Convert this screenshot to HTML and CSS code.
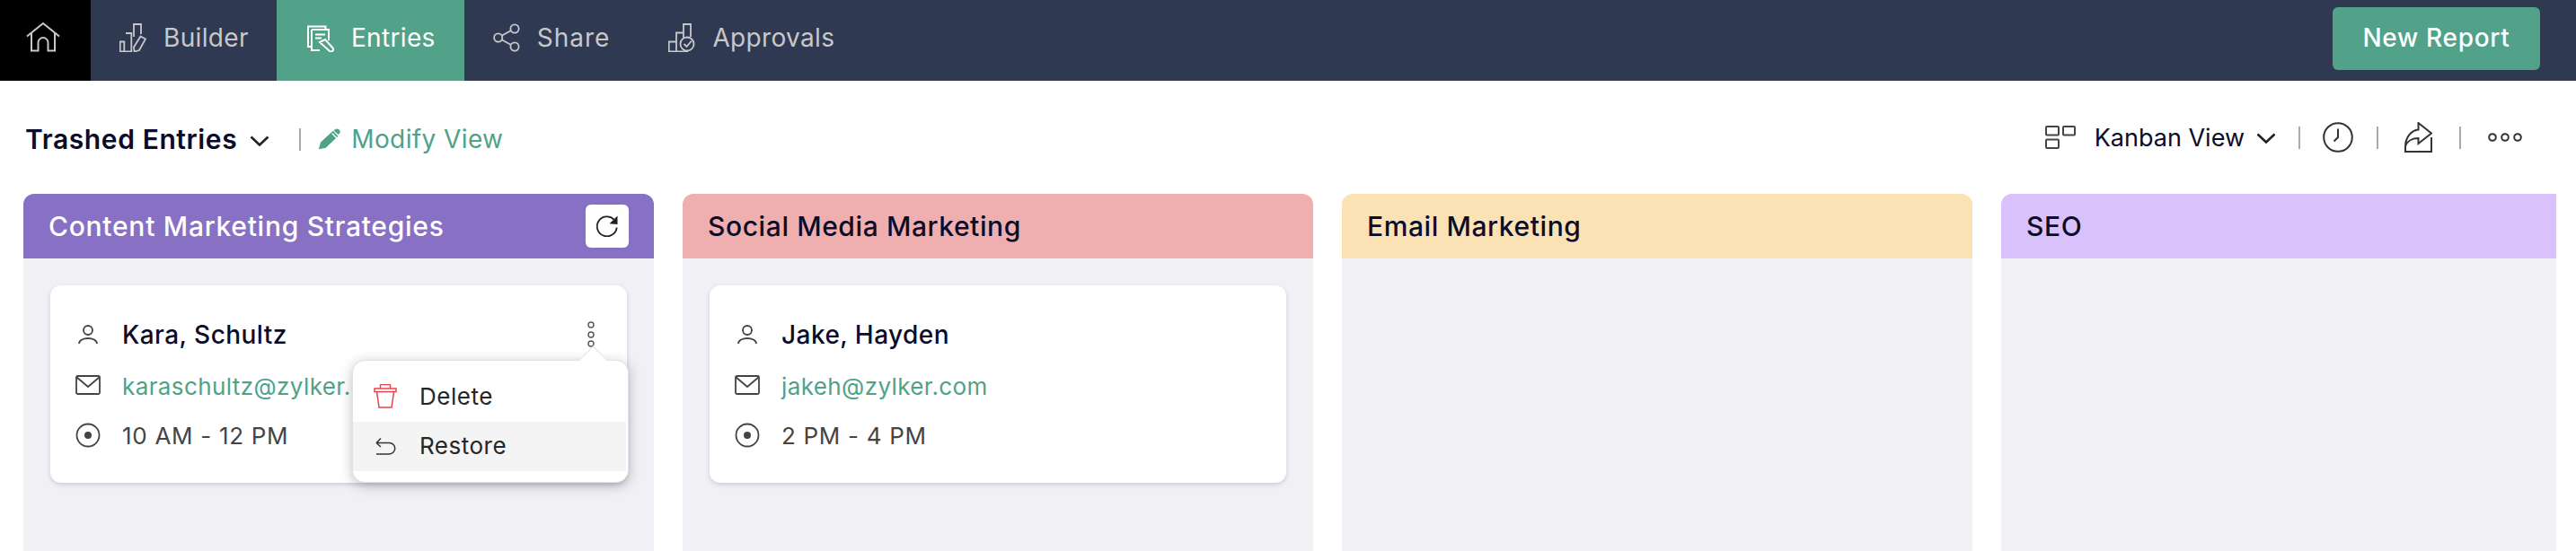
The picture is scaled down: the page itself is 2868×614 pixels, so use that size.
FILE: index.html
```html
<!DOCTYPE html>
<html lang="en">
<head>
<meta charset="utf-8">
<title>Trashed Entries</title>
<link rel="stylesheet" href="styles.css">
</head>
<body>
<header class="nav">
  <a class="home"><svg class="i-home" viewBox="0 0 40 36"><path d="M2 16.5 20 2l18 14.5M7 13v19.5h7.5v-9a5.5 5.5 0 0 1 11 0v9H33V13"/></svg></a>
  <a class="tab tab-builder"><svg class="i-nav" viewBox="0 0 30 32"><path d="M.7 20.5h4.6v10.8H.7zM7 11h6.3v20.3H5.300M16 15V1h8v11M23.500 14.500l5.500 3-7 12.500-5.500 1.500-.5-5z"/></svg><span>Builder</span></a>
  <a class="tab active"><svg class="i-nav" viewBox="0 0 30 32"><path d="M4 26H1V3.500h19.500V7M5 7h19v12M5 7v23h9M9 12.500h11M9 16.500h7M14 21l6-3 8.500 9.500a2.500 2.500 0 0 1-3.500 3.500z"/></svg><span>Entries</span></a>
  <a class="tab tab-share"><svg class="i-nav" viewBox="0 0 30 32"><circle cx="5.700" cy="16" r="4.600"/><circle cx="24" cy="6" r="4.600"/><circle cx="24" cy="26" r="4.600"/><path d="m10 13.500 10-5.500M10 18.500l10 5.500"/></svg><span>Share</span></a>
  <a class="tab"><svg class="i-nav" viewBox="0 0 30 32"><path d="M.7 20.500h8.300v10.800H.7zM9 31.300V10.500h8M17 16V1h8v14M9 31.300h13"/><circle cx="21" cy="23" r="7.500"/><path d="m17.500 23 3 3 5.500-6.500"/></svg><span>Approvals</span></a>
  <button class="new-report">New Report</button>
</header>

<section class="toolbar">
  <h1 class="view-title">Trashed Entries</h1>
  <svg class="chev chev-title" viewBox="0 0 22 12"><path d="m1.500 1.500 9.500 9 9.500-9"/></svg>
  <span class="sep sep-left"></span>
  <svg class="i-pencil" viewBox="0 0 24 22"><path d="M.7 21.300 3 14 15.500 2.500l5.200 5.500L8 20z"/><path class="notch" d="m14.500 5 5 5.300"/><path d="M17.300 1.300a3 3 0 0 1 4.500 0 3 3 0 0 1 0 4.200l-.8.800-4.800-4z"/></svg>
  <a class="modify">Modify View</a>
  <div class="tools">
    <svg class="i-kanban" viewBox="0 0 34 26"><rect x="1" y="1" width="14" height="9.500" rx="1"/><rect x="20" y="1" width="13" height="9.500" rx="1"/><rect x="1" y="15.500" width="14" height="9.500" rx="1"/></svg>
    <span class="view-name">Kanban View</span>
    <svg class="chev chev-view" viewBox="0 0 22 12"><path d="m1.500 1.500 9.500 9 9.500-9"/></svg>
    <span class="sep sep-a"></span>
    <svg class="i-clock" viewBox="0 0 34 34"><circle cx="17" cy="17" r="15.800"/><path d="M17 7.500V17l-4.500 4.500"/></svg>
    <span class="sep sep-b"></span>
    <svg class="i-export" viewBox="0 0 31 34"><path d="M1 27v6h29V17M15.500 1 30 12.500 15.500 24v-6C9 18 3 21 1 27 1 17 8 9 15.500 8.500z"/></svg>
    <span class="sep sep-c"></span>
    <svg class="i-more" viewBox="0 0 38 10"><circle cx="5" cy="5" r="3.800"/><circle cx="19" cy="5" r="3.800"/><circle cx="33" cy="5" r="3.800"/></svg>
  </div>
</section>

<main class="board">
  <section class="col">
    <div class="col-head purple">
      <h2>Content Marketing Strategies</h2>
      <button class="refresh"><svg viewBox="0 0 24 24"><path d="M19.500 4.500A11 11 0 1 0 22.700 13.500"/><path class="solid" d="M23.500.5v9.500l-9-.8z"/></svg></button>
    </div>
    <div class="col-body">
      <article class="card">
        <div class="row">
          <svg class="ico" viewBox="0 0 30 30"><circle cx="15" cy="10" r="5"/><path d="M5 25c0-8 20-8 20 0"/></svg>
          <span class="name">Kara, Schultz</span>
          <svg class="i-kebab" viewBox="0 0 8 30"><circle cx="4" cy="4" r="3"/><circle cx="4" cy="15" r="3"/><circle cx="4" cy="25" r="3"/></svg>
        </div>
        <div class="row">
          <svg class="ico" viewBox="0 0 30 30"><rect x="2" y="5" width="26" height="20" rx="1.500"/><path d="m2 6 13 11L28 6"/></svg>
          <span class="email">karaschultz@zylker.com</span>
        </div>
        <div class="row">
          <svg class="ico" viewBox="0 0 30 30"><circle cx="15" cy="15" r="12.500"/><circle class="solid" cx="15" cy="15" r="4"/></svg>
          <span class="time">10 AM - 12 PM</span>
        </div>
        <div class="popup">
          <span class="caret"></span>
          <div class="menu-item">
            <svg class="i-trash" viewBox="0 0 26 27"><path d="M1 5h24v3.500H1zM7.500 5V1.500a1 1 0 0 1 1-1h9a1 1 0 0 1 1 1V5M3.500 8.500 6 26h14l2.500-17.500"/></svg>
            <span>Delete</span>
          </div>
          <div class="menu-item hover">
            <svg class="i-restore" viewBox="0 0 26 20"><path d="M3 6.500 8 1.500M3 6.500l5 4.500M3 6.500h14.500a6.200 6.200 0 0 1 0 12.400H3"/></svg>
            <span>Restore</span>
          </div>
        </div>
      </article>
    </div>
  </section>

  <section class="col">
    <div class="col-head pink"><h2>Social Media Marketing</h2></div>
    <div class="col-body">
      <article class="card">
        <div class="row">
          <svg class="ico" viewBox="0 0 30 30"><circle cx="15" cy="10" r="5"/><path d="M5 25c0-8 20-8 20 0"/></svg>
          <span class="name">Jake, Hayden</span>
        </div>
        <div class="row">
          <svg class="ico" viewBox="0 0 30 30"><rect x="2" y="5" width="26" height="20" rx="1.500"/><path d="m2 6 13 11L28 6"/></svg>
          <span class="email">jakeh@zylker.com</span>
        </div>
        <div class="row">
          <svg class="ico" viewBox="0 0 30 30"><circle cx="15" cy="15" r="12.500"/><circle class="solid" cx="15" cy="15" r="4"/></svg>
          <span class="time">2 PM - 4 PM</span>
        </div>
      </article>
    </div>
  </section>

  <section class="col">
    <div class="col-head peach"><h2>Email Marketing</h2></div>
    <div class="col-body"></div>
  </section>

  <section class="col">
    <div class="col-head lavender"><h2>SEO</h2></div>
    <div class="col-body"></div>
  </section>
</main>
</body>
</html>
```

FILE: styles.css
```css
* { box-sizing: border-box; }
html, body { margin: 0; height: 100%; }
body {
  display: flex;
  flex-direction: column;
  height: 614px;
  overflow: hidden;
  background: #fff;
  font-family: Inter, "Liberation Sans", sans-serif;
  color: #0b0c2a;
}
svg { display: block; flex: none; fill: none; }

/* top bar */
.nav { display: flex; align-items: stretch; height: 90px; flex: none; background: #2f3a52; }
.home { display: flex; align-items: center; width: 101px; padding: 0 0 6px 28px; background: #000; }
.i-home { width: 40px; height: 36px; stroke: #c8c8c8; stroke-width: 2; }
.tab { display: flex; align-items: center; gap: 19px; padding: 0 33px 6px 32px; font-size: 28px; letter-spacing: .35px; color: #c8c8c8; }
.tab-builder { padding-right: 31px; }
.tab-share { letter-spacing: 1px; }
.tab.active { background: #52a28a; color: #fff; padding: 0 32px 6px 34px; }
.i-nav { width: 30px; height: 32px; stroke: #c8c8c8; stroke-width: 1.800; }
.active .i-nav { stroke: #fff; stroke-width: 2; }
.new-report {
  margin: 8px 40px 12px auto;
  width: 231px;
  padding: 0 0 2px;
  border: 0;
  border-radius: 6px;
  background: #52a28a;
  color: #fff;
  font: 500 28px Inter, "Liberation Sans", sans-serif;
  letter-spacing: .7px;
}

/* toolbar */
.toolbar { display: flex; align-items: center; height: 126px; flex: none; padding: 4px 60px 0 28px; }
.view-title { margin: 0; font-size: 30px; font-weight: 600; line-height: 36px; letter-spacing: .6px; }
.chev { stroke: #222; stroke-width: 2.600; }
.chev-title { width: 22px; height: 12px; margin: 4px 0 0 14px; }
.sep { width: 2px; height: 25px; background: #aaa; flex: none; }
.sep-left { margin-left: 33px; }
.i-pencil { width: 26px; height: 24px; margin-left: 19px; fill: #4fa288; }
.i-pencil .notch { stroke: #fff; stroke-width: 1.200; }
.modify { margin-left: 11px; font-size: 28px; letter-spacing: .4px; color: #4fa288; }
.tools { display: flex; align-items: center; margin: -4px 0 0 auto; }
.i-kanban { width: 34px; height: 26px; stroke: #444; stroke-width: 2; }
.view-name { margin-left: 21px; font-size: 27px; }
.chev-view { width: 22px; height: 12px; margin: 2px 0 0 13px; }
.sep-a { margin-left: 25px; }
.i-clock { width: 34px; height: 34px; margin-left: 25px; stroke: #333; stroke-width: 2; }
.sep-b { margin-left: 26px; }
.i-export { width: 31px; height: 34px; margin-left: 29px; stroke: #333; stroke-width: 2; }
.sep-c { margin-left: 30px; }
.i-more { width: 38px; height: 10px; margin-left: 30px; stroke: #333; stroke-width: 2; }

/* board */
.board { display: flex; gap: 32px; flex: 1; margin: 0 22px 0 26px; overflow: hidden; }
.col { display: flex; flex-direction: column; flex: 0 0 702px; }
.col-head {
  display: flex;
  align-items: center;
  justify-content: space-between;
  height: 72px;
  flex: none;
  padding: 0 28px 0 28px;
  border-radius: 12px 12px 0 0;
}
.col-head h2 { margin: 0; font-size: 30px; font-weight: 500; letter-spacing: .6px; }
.purple { background: #8870c4; color: #fff; }
.col-head.purple h2 { letter-spacing: .73px; }
.pink { background: #f0afaf; }
.peach { background: #fae2b5; }
.lavender { background: #d9c2fb; }
.refresh { display: flex; align-items: center; justify-content: center; width: 48px; height: 48px; padding: 0; border: 0; border-radius: 6px; background: #fff; }
.refresh svg { width: 24px; height: 24px; stroke: #222; stroke-width: 1.800; }
.refresh .solid { fill: #222; stroke: none; }
.col-body { flex: 1; padding: 30px; background: #f1f0f5; }

/* card */
.card {
  position: relative;
  height: 220px;
  padding: 27px 36px 25px 27px;
  border-radius: 12px;
  background: #fff;
  box-shadow: 0 2px 5px rgba(60, 60, 90, .2);
}
.row { display: flex; align-items: center; gap: 23px; height: 56px; font-size: 26px; }
.ico { width: 30px; height: 30px; stroke: #444; stroke-width: 1.800; }
.ico .solid { fill: #444; stroke: none; }
.name { font-size: 28px; font-weight: 500; letter-spacing: .45px; }
.email { padding-top: 2px; letter-spacing: .4px; color: #4fa288; white-space: nowrap; }
.time { letter-spacing: .7px; color: #444; }
.i-kebab { width: 8px; height: 30px; margin-left: auto; stroke: #555; stroke-width: 1.400; }

/* popup menu */
.popup {
  position: absolute;
  left: 336px;
  top: 83px;
  width: 308px;
  height: 137px;
  padding: 13px 2px 0 0;
  border: 1px solid #e2e2e2;
  border-radius: 14px;
  background: #fff;
  box-shadow: 0 3px 14px rgba(30, 30, 50, .28);
}
.caret {
  position: absolute;
  right: 27px;
  top: -12px;
  width: 23px;
  height: 23px;
  transform: rotate(45deg);
  background: #fff;
  border-top: 1px solid #e2e2e2;
  border-left: 1px solid #e2e2e2;
}
.menu-item { display: flex; align-items: center; gap: 25px; height: 55px; padding: 0 0 2px 23px; font-size: 26px; letter-spacing: .5px; color: #262626; }
.menu-item.hover { background: #f4f4f5; }
.i-trash { width: 26px; height: 27px; stroke: #e8434e; stroke-width: 1.500; }
.i-restore { width: 26px; height: 20px; stroke: #333; stroke-width: 1.500; }
```
